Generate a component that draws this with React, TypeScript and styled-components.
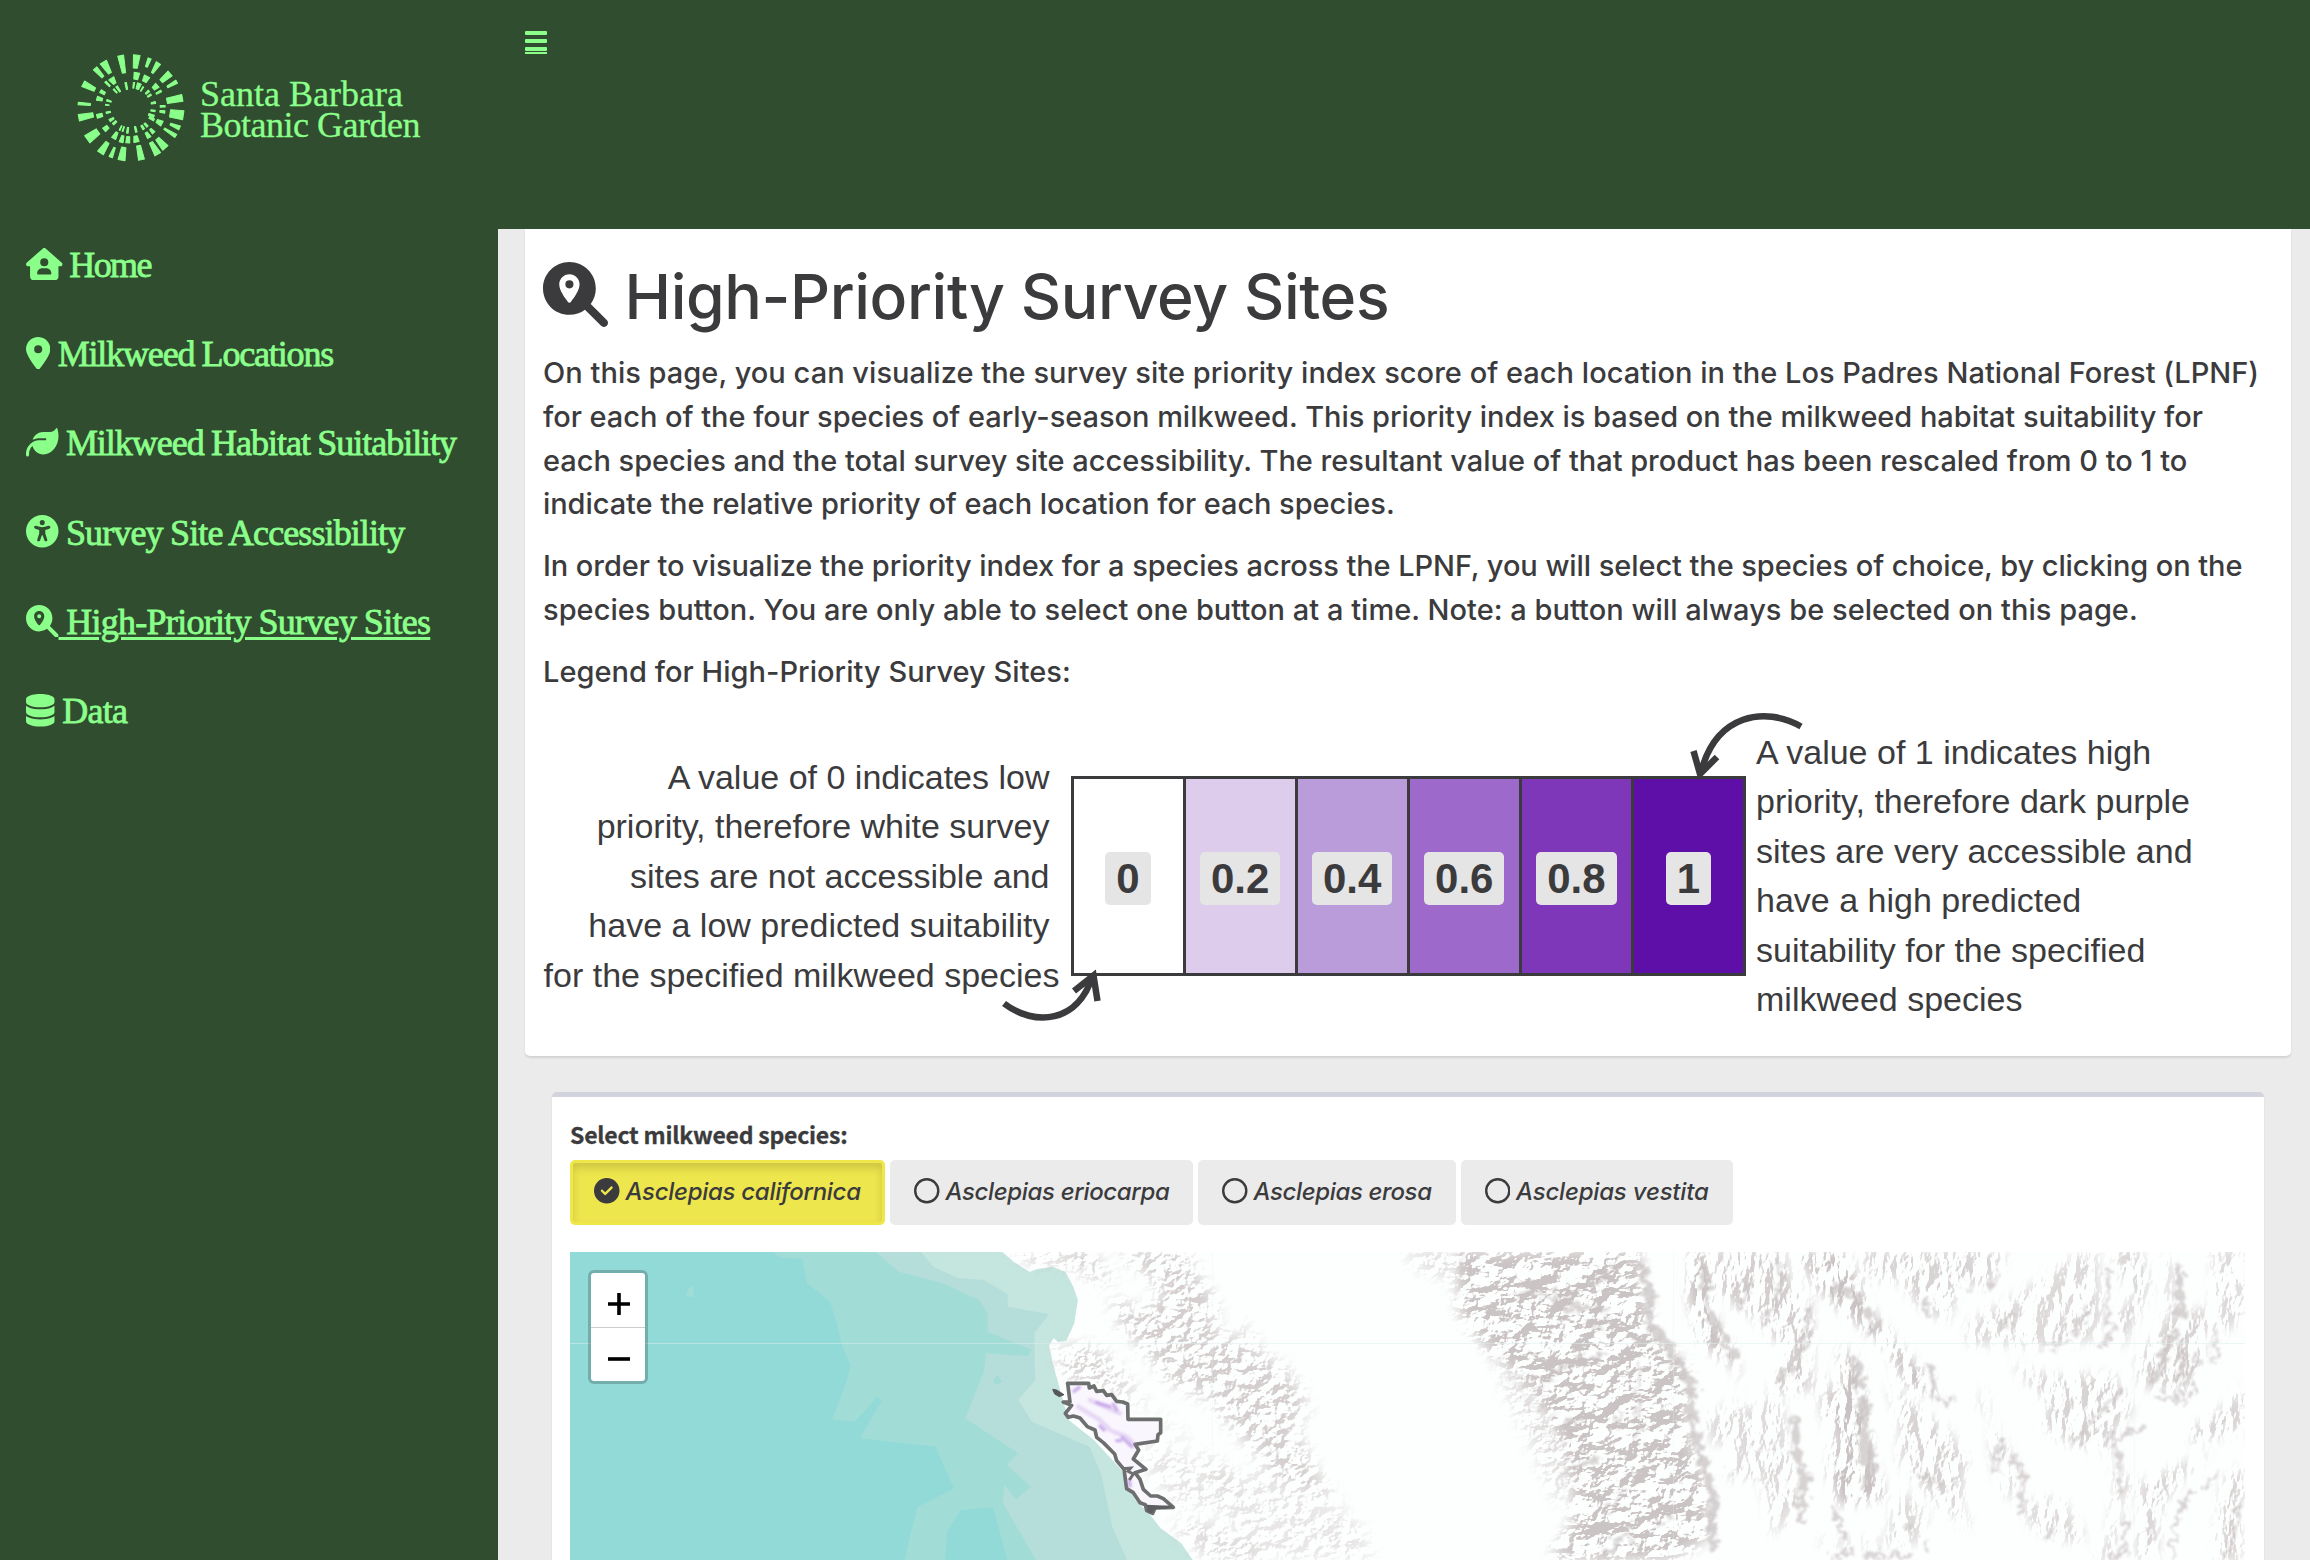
import React from 'react';
import styled, { createGlobalStyle } from 'styled-components';
import {
  FaCircleCheck,
  FaDatabase,
  FaHouseUser,
  FaLeaf,
  FaLocationDot,
  FaMagnifyingGlassLocation,
  FaRegCircle,
  FaUniversalAccess,
} from 'react-icons/fa6';

const forest = '#304d2f';
const lime = '#8aff8a';
const ink = '#3b3b3d';
const serif = "'Liberation Serif', 'Times New Roman', serif";
const grotesk = "Inter, 'Liberation Sans', sans-serif";
const arial = "'Liberation Sans', Arial, sans-serif";

const GlobalStyle = createGlobalStyle`
  *, *::before, *::after { box-sizing: border-box; }
  body { margin: 0; background: #ebebeb; color: ${ink}; font-family: ${grotesk}; overflow: hidden; }
`;

const Page = styled.div`
  display: flex;
  width: 2310px;
  height: 1560px;
  overflow: hidden;
`;

const Sidebar = styled.aside`
  flex: none;
  width: 498px;
  background: ${forest};
  color: ${lime};
  font-family: ${serif};
`;

const Brand = styled.div`
  display: flex;
  align-items: flex-start;
  height: 219.2px;
  padding: 40px 0 0 60px;
`;

const BrandMark = styled.svg`
  flex: none;
  width: 140px;
  height: 140px;
  fill: ${lime};
`;

const BrandName = styled.div`
  padding-top: 38.5px;
  font-size: 36px;
  line-height: 31px;
  white-space: nowrap;
  -webkit-text-stroke: 0.3px ${lime};
`;

const BrandLine = styled.div<{ $track: number }>`
  letter-spacing: ${(p) => p.$track}px;
`;

const NavItem = styled.a<{ $active?: boolean; $track: number }>`
  display: flex;
  align-items: center;
  height: 89.3px;
  padding-left: 26px;
  font-size: 36px;
  letter-spacing: ${(p) => p.$track}px;
  white-space: pre;
  -webkit-text-stroke: 0.8px ${lime};
  text-decoration: ${(p) => (p.$active ? 'underline' : 'none')};
  text-decoration-thickness: 2.5px;
  text-underline-offset: 2.5px;
`;

const NavIcon = styled.span<{ $width: number }>`
  display: flex;
  flex: none;
  width: ${(p) => p.$width}px;

  svg {
    width: 100%;
    height: 32.5px;
  }
`;

const NavText = styled.span`
  padding-top: 2px;
  word-spacing: -0.6px;
`;

const Main = styled.main`
  display: flex;
  flex: 1;
  flex-direction: column;
  min-width: 0;
`;

const TopBar = styled.header`
  flex: none;
  height: 229px;
  padding: 31px 27px;
  background: ${forest};
`;

const MenuToggle = styled.div`
  display: flex;
  flex-direction: column;
  gap: 4px;
  width: 22px;
  padding-bottom: 1px;
  border-bottom: 2px solid ${lime};
`;

const MenuBar = styled.span`
  height: 4px;
  border-radius: 1px;
  background: ${lime};
`;

const Content = styled.div`
  display: flex;
  flex: 1;
  flex-direction: column;
  gap: 36px;
  padding: 0 19px 0 27px;
`;

const Intro = styled.section`
  position: relative;
  height: 827px;
  padding: 32px 18px 0;
  background: #fff;
  border-radius: 0 0 5px 5px;
  box-shadow: 0 2px 2px rgba(0, 0, 0, 0.1);
`;

const Title = styled.h1`
  display: flex;
  align-items: center;
  height: 70px;
  margin: 0 0 20px;
  font-size: 62.5px;
  font-weight: 500;
  line-height: 70px;
  letter-spacing: -0.4px;

  svg {
    width: 65px;
    height: 65px;
    margin: -4px 16.5px 0 0;
  }
`;

const Paragraph = styled.p`
  margin: 0 0 18px;
  font-size: 29px;
  font-weight: 500;
  line-height: 43.8px;
`;

const TextLine = styled.span<{ $track: number }>`
  display: block;
  letter-spacing: ${(p) => p.$track}px;
  white-space: nowrap;
`;

const Legend = styled.div`
  display: flex;
  align-items: flex-start;
  margin-top: -19px;
  font-family: ${arial};
`;

const LegendNote = styled.div<{ $side: 'left' | 'right' }>`
  flex: none;
  width: ${(p) => (p.$side === 'left' ? 527.5 : 500)}px;
  padding: ${(p) => (p.$side === 'left' ? '60.5px 21px 0 0' : '35.5px 0 0 10px')};
  font-size: 34px;
  line-height: 49.4px;
  text-align: ${(p) => (p.$side === 'left' ? 'right' : 'left')};
  white-space: nowrap;
`;

const LastLine = styled.div`
  margin-right: -10px;
`;

const Scale = styled.div`
  display: flex;
  width: 675.5px;
  height: 200px;
  margin-top: 83px;
  border: 3px solid ${ink};
`;

const Swatch = styled.div<{ $color: string }>`
  display: flex;
  flex: 1;
  align-items: center;
  justify-content: center;
  background: ${(p) => p.$color};

  & + & {
    border-left: 3px solid ${ink};
  }
`;

const SwatchLabel = styled.span`
  padding: 0 11px;
  margin-top: 5px;
  border-radius: 5px;
  background: #e5e5e5;
  font-size: 42px;
  font-weight: 700;
  line-height: 53px;
`;

const Arrows = styled.svg`
  position: absolute;
  left: 18px;
  top: 464px;
  width: 1730px;
  height: 350px;
  fill: none;
  stroke: ${ink};
  stroke-width: 6.5;
`;

const MapCard = styled.section`
  flex: 1;
  margin: 0 27px;
  padding: 31px 18px 0;
  border-top: 5px solid #d2d3de;
  border-radius: 5px 5px 0 0;
  background: #fff;
  box-shadow: 0 2px 2px rgba(0, 0, 0, 0.1);
`;

const FieldLabel = styled.div`
  height: 32px;
  font-family: 'Noto Sans CJK JP', 'Noto Sans', sans-serif;
  font-size: 23px;
  font-weight: 700;
  line-height: 12px;
  letter-spacing: -0.22px;
  -webkit-text-stroke: 0.3px ${ink};
`;

const SpeciesGroup = styled.div`
  display: flex;
  gap: 5px;
  margin-bottom: 27px;
`;

const SpeciesButton = styled.button<{ $selected?: boolean; $width: number; $track: number }>`
  display: flex;
  align-items: center;
  width: ${(p) => p.$width}px;
  height: 65px;
  padding: 0 0 2px 21px;
  border: 3px solid ${(p) => (p.$selected ? '#efe74a' : '#ebebeb')};
  border-radius: 5px;
  background: ${(p) => (p.$selected ? '#eee64d' : '#ebebeb')};
  box-shadow: ${(p) => (p.$selected ? 'inset 0 5px 9px rgba(0, 0, 0, 0.14)' : 'none')};
  color: ${ink};
  font-family: ${grotesk};
  font-size: 24px;
  font-style: italic;
  font-weight: 500;
  letter-spacing: ${(p) => p.$track}px;
  white-space: nowrap;

  svg {
    flex: none;
    width: 25.5px;
    height: 25.5px;
    margin: -1px 6px 0 0;
  }
`;

const MapFrame = styled.div`
  position: relative;
  height: 308px;
  overflow: hidden;
`;

const Terrain = styled.svg`
  display: block;
  width: 1675px;
  height: 308px;
`;

const ZoomControl = styled.div`
  position: absolute;
  left: 18px;
  top: 18px;
  width: 60px;
  border: 3px solid rgba(0, 0, 0, 0.2);
  border-radius: 6px;
  background: #fff;
  background-clip: padding-box;
`;

const ZoomButton = styled.div`
  display: flex;
  align-items: center;
  justify-content: center;
  height: 54px;
  padding: 8px 0 0 1px;

  & + & {
    border-top: 1px solid #ccc;
  }

  svg {
    width: 22px;
    height: 22px;
    stroke: #000;
    stroke-width: 3.6;
  }
`;

/* Sunburst ray: centre x, centre y, length, inner width, outer width. */
type Ray = [number, number, number, number, number];
const rays: Ray[] = [
  [187, 73, 56, 12, 20], [228, 65, 42, 14, 22], [264, 68, 30, 8, 12], [286, 84, 38, 8, 17],
  [317, 112, 38, 14, 21], [336, 133, 35, 8, 13], [344, 178, 50, 18, 22], [350, 223, 43, 24, 29],
  [345, 258, 33, 8, 15], [330, 277, 44, 7, 13], [304, 310, 40, 14, 23], [283, 325, 44, 12, 22],
  [240, 338, 46, 14, 20], [188, 341, 42, 15, 23], [158, 337, 34, 7, 13], [132, 323, 41, 13, 23],
  [98, 286, 43, 21, 29], [78, 229, 47, 15, 22], [73, 192, 40, 8, 10], [87, 140, 42, 13, 21],
  [117, 98, 38, 10, 16], [140, 83, 42, 12, 24],
  [229, 108, 23, 14, 19], [257, 117, 21, 14, 20], [286, 141, 19, 12, 18], [296, 157, 20, 6, 8],
  [308, 199, 18, 7, 7], [307, 215, 18, 7, 9], [298, 247, 21, 12, 18], [276, 273, 18, 8, 12],
  [263, 285, 21, 9, 14], [228, 297, 21, 12, 18], [204, 299, 22, 11, 14], [186, 297, 23, 9, 14],
  [166, 286, 24, 9, 16], [138, 265, 18, 13, 16], [119, 227, 20, 12, 14], [119, 177, 20, 10, 14],
  [128, 157, 18, 10, 12], [143, 132, 22, 6, 8], [159, 123, 22, 11, 20],
  [221, 136, 20, 5, 6], [235, 139, 21, 10, 14], [246, 147, 18, 4, 5], [262, 157, 16, 6, 8],
  [268, 167, 15, 6, 7], [280, 189, 16, 6, 8], [279, 212, 16, 6, 7], [274, 226, 20, 8, 9], [275, 236, 19, 8, 9],
  [258, 255, 16, 7, 8], [248, 262, 16, 7, 8], [227, 268, 20, 6, 7], [203, 271, 20, 6, 7],
  [190, 267, 18, 4, 5], [182, 264, 18, 4, 5], [164, 248, 16, 7, 8], [155, 238, 17, 7, 10],
  [145, 217, 16, 6, 7], [142, 195, 14, 4, 5], [147, 183, 17, 5, 7], [175, 147, 22, 6, 8],
  [166, 153, 18, 5, 6], [199, 138, 24, 6, 7],
];

const SunburstRay = ({ ray: [x, y, len, wi, wo] }: { ray: Ray }) => {
  const angle = (Math.atan2(y - 203, x - 212) * 180) / Math.PI;
  const h = len / 2 - 1.5;
  const a = wi / 2 - 1;
  const b = wo / 2 - 1;
  return (
    <path
      transform={`translate(${x} ${y}) rotate(${angle})`}
      d={`M${-h} ${-a}L${h} ${-b}V${b}L${-h} ${a}Z`}
      stroke={lime}
      strokeWidth={3}
      strokeLinejoin="round"
    />
  );
};

const navItems = [
  { label: 'Home', icon: <FaHouseUser />, width: 36.5, track: -1.6 },
  { label: 'Milkweed Locations', icon: <FaLocationDot />, width: 24.4, track: -1.16 },
  { label: 'Milkweed Habitat Suitability', icon: <FaLeaf />, width: 32.5, track: -1.02 },
  { label: 'Survey Site Accessibility', icon: <FaUniversalAccess />, width: 32.5, track: -0.9 },
  { label: 'High-Priority Survey Sites', icon: <FaMagnifyingGlassLocation />, width: 32.5, track: -0.72, active: true },
  { label: 'Data', icon: <FaDatabase />, width: 28.5, track: -0.7 },
];

const paragraphs: [string, number][][] = [
  [
    ['On this page, you can visualize the survey site priority index score of each location in the Los Padres National Forest (LPNF)', 0.025],
    ['for each of the four species of early-season milkweed. This priority index is based on the milkweed habitat suitability for', -0.036],
    ['each species and the total survey site accessibility. The resultant value of that product has been rescaled from 0 to 1 to', -0.02],
    ['indicate the relative priority of each location for each species.', -0.07],
  ],
  [
    ['In order to visualize the priority index for a species across the LPNF, you will select the species of choice, by clicking on the', -0.075],
    ['species button. You are only able to select one button at a time. Note: a button will always be selected on this page.', 0.025],
  ],
  [['Legend for High-Priority Survey Sites:', 0.03]],
];

const swatches = [
  { label: '0', color: '#ffffff' },
  { label: '0.2', color: '#ddccec' },
  { label: '0.4', color: '#ba9cda' },
  { label: '0.6', color: '#9d6acc' },
  { label: '0.8', color: '#7f37b9' },
  { label: '1', color: '#5e0fa8' },
];

const species = [
  { name: 'Asclepias californica', width: 315, track: -0.3, selected: true },
  { name: 'Asclepias eriocarpa', width: 303, track: -0.36 },
  { name: 'Asclepias erosa', width: 257.5, track: -0.38 },
  { name: 'Asclepias vestita', width: 272, track: -0.2 },
];

const TerrainMap = () => (
  <Terrain viewBox="570 1252 1675 308">
    <defs>
      <filter id="hills" filterUnits="userSpaceOnUse" x="570" y="1252" width="1675" height="308" colorInterpolationFilters="sRGB">
        <feGaussianBlur in="SourceAlpha" stdDeviation="8" result="area" />
        <feTurbulence type="fractalNoise" baseFrequency="0.075 0.09" numOctaves="4" seed="4" />
        <feColorMatrix values="0 0 0 0 0  0 0 0 0 0  0 0 0 0 0  1 0 0 0 0" />
        <feDiffuseLighting surfaceScale="9" lightingColor="#fff">
          <feDistantLight azimuth="225" elevation="45" />
        </feDiffuseLighting>
        <feColorMatrix values="0 0 0 0 .79  0 0 0 0 .76  0 0 0 0 .76  -2.6 0 0 0 1.65" />
        <feComposite in2="area" operator="in" />
        <feGaussianBlur stdDeviation="0.6" />
      </filter>
      <filter id="sierra" filterUnits="userSpaceOnUse" x="570" y="1252" width="1675" height="308" colorInterpolationFilters="sRGB">
        <feGaussianBlur in="SourceAlpha" stdDeviation="7" result="area" />
        <feTurbulence type="fractalNoise" baseFrequency="0.045 0.055" numOctaves="5" seed="12" />
        <feColorMatrix values="0 0 0 0 0  0 0 0 0 0  0 0 0 0 0  1 0 0 0 0" />
        <feDiffuseLighting surfaceScale="16" lightingColor="#fff">
          <feDistantLight azimuth="235" elevation="45" />
        </feDiffuseLighting>
        <feColorMatrix values="0 0 0 0 .785  0 0 0 0 .755  0 0 0 0 .755  -3 0 0 0 1.9" />
        <feComposite in2="area" operator="in" />
        <feGaussianBlur stdDeviation="0.6" />
      </filter>
      <filter id="ridges" filterUnits="userSpaceOnUse" x="570" y="1252" width="1675" height="308" colorInterpolationFilters="sRGB">
        <feGaussianBlur in="SourceAlpha" stdDeviation="6" result="area" />
        <feTurbulence type="fractalNoise" baseFrequency="0.07 0.035" numOctaves="5" seed="9" />
        <feColorMatrix values="0 0 0 0 0  0 0 0 0 0  0 0 0 0 0  1 0 0 0 0" />
        <feDiffuseLighting surfaceScale="11" lightingColor="#fff">
          <feDistantLight azimuth="210" elevation="45" />
        </feDiffuseLighting>
        <feColorMatrix values="0 0 0 0 .79  0 0 0 0 .76  0 0 0 0 .76  -2.6 0 0 0 1.6" />
        <feComposite in2="area" operator="in" />
        <feGaussianBlur stdDeviation="0.7" />
      </filter>
      <filter id="rough" filterUnits="userSpaceOnUse" x="570" y="1252" width="1675" height="308">
        <feTurbulence type="fractalNoise" baseFrequency="0.12" numOctaves="3" seed="2" result="n" />
        <feDisplacementMap in="SourceGraphic" in2="n" scale="22" xChannelSelector="R" yChannelSelector="G" />
        <feGaussianBlur stdDeviation="0.9" />
      </filter>
      <filter id="soft"><feGaussianBlur stdDeviation="3" /></filter>
    </defs>

    <rect x="570" y="1252" width="1675" height="308" fill="#91dad8" />
    <g transform="translate(520 1070) scale(.45918 .33333)">
      <path fill="#a2dcd6" d="M545 540L565 562 615 566 625 640 675 695 690 760 702 830 720 885 710 940 680 1048 728 1055 760 1010 775 980 788 992 740 1105 905 1130 945 1255 865 1312 835 1480H1600V540Z" />
      <path fill="#91dad8" d="M925 1480L930 1385 960 1320 1030 1312 1063 1480Z" />
      <path fill="#b5dedb" d="M770 540L825 605 920 640 1000 690 1018 730 1018 785 1115 840 1105 858 1015 850 1010 905 970 1045 1085 1150 1060 1185 1113 1250 1080 1288 1055 1245 1052 1300 1128 1480H1600V540Z" />
      <path fill="#a2dcd6" d="M1030 935L1040 915 1050 935 1038 945Z" />
      <path fill="#a2dcd6" d="M368 655L378 645V680H360Z" />
      <path fill="#c5e5df" d="M870 540L900 590 955 625 1010 630 1062 672V710L1152 733 1120 790 1122 930 1085 990 1115 1055 1240 1130 1265 1210 1290 1370 1325 1480H1600V540Z" />
      <path fill="#fdfefe" d="M1045 540L1075 575 1110 606 1125 598 1160 590 1188 606 1205 650 1215 690 1207 760 1190 812 1172 816 1162 804 1152 828 1165 905 1195 1050 1250 1110 1310 1200 1340 1290 1370 1330 1395 1375 1440 1420 1470 1480H3900V540Z" />
    </g>

    <g filter="url(#hills)">
      <g transform="translate(1000 1250) scale(.33333)">
        <path opacity=".8" d="M20 0L100 40 200 40 290 90 350 95 300 40 260 0Z" />
        <path opacity=".8" d="M350 0L420 60 500 130 420 180 330 140 350 210 430 300 520 410 620 440 700 540 800 640 860 690 1000 760 1060 830 1040 800 940 650 880 520 930 480 870 370 760 290 640 240 650 150 600 90 560 0Z" />
        <path opacity=".7" d="M160 300L200 390 380 440 490 500 560 570 660 690 720 740 690 660 540 570 420 440 330 320 250 280Z" />
        <path opacity=".4" d="M440 570L430 650 520 760 650 780 720 840 690 930 1120 930 1080 820 950 760 800 640 700 700 600 640Z" />
        <path opacity=".6" d="M500 820L570 870 620 930 800 930 640 820Z" />
        <path opacity=".8" d="M710 200L770 270 740 290Z" />
      </g>
      <g transform="translate(1400 1250) scale(.33333)">
        <path opacity=".5" d="M0 0L170 0 190 100 60 60ZM280 300L330 450 420 640 480 780 520 640 400 400Z" />
      </g>
    </g>
    <g filter="url(#sierra)">
      <g transform="translate(1400 1250) scale(.33333)">
        <path opacity=".95" d="M160 0L180 200 270 310 390 420 470 560 510 700 520 800 450 930 820 930 930 860 920 700 870 560 860 350 760 250 730 100 720 0Z" />
      </g>
    </g>
    <g filter="url(#ridges)">
      <g transform="translate(1400 1250) scale(.33333)">
        <path d="M870 0L860 120 900 280 1000 350 1030 420 1000 300 940 200 920 0Z" />
        <path opacity=".8" d="M940 0L950 130 1060 200 1160 300 1110 430 1230 420 1240 260 1230 160 1170 90 1150 0Z" />
        <path opacity=".6" d="M920 500L990 460 1060 480 1100 440 1140 440 1180 640 1200 760 1120 860 1080 680 980 690 1000 580 930 580Z" />
        <path opacity=".8" d="M1170 0H1340L1320 170 1250 120Z" />
        <path opacity=".6" d="M1240 400L1290 380 1330 500 1330 720 1290 640 1280 500Z" />
      </g>
      <g transform="translate(1820 1250) scale(.33333)">
        <path d="M0 0L80 20 160 190 240 290 340 400 370 450 250 400 200 290 60 180 0 120Z" />
        <path d="M60 290L110 320 140 480 160 640 200 740 60 770 20 660 70 560 0 480 60 420Z" />
        <path opacity=".7" d="M130 0H560L520 100 420 110 380 220 290 160 240 90 130 90Z" />
        <path opacity=".7" d="M200 400L290 470 380 540 440 620 420 800 370 780 240 640 240 520Z" />
        <path opacity=".6" d="M440 220L600 130 700 60 790 0 830 0 850 200 820 270 640 290 440 280Z" />
        <path opacity=".7" d="M870 0L960 0 990 100 960 180 900 300 880 200 940 150Z" />
        <path opacity=".7" d="M1030 0L1060 60V200L1170 170 1150 320 1110 430 960 410 950 330 1040 200Z" />
        <path opacity=".6" d="M1180 0L1278 0V200L1180 270Z" />
        <path opacity=".7" d="M570 340L690 380 880 370 940 480 870 560 890 700 860 880 820 930 880 930 900 760 940 700 850 600 740 580 660 520 690 460Z" />
        <path opacity=".6" d="M480 480L520 500 510 620 540 700 580 760 600 660 540 560 480 400Z" />
        <path opacity=".6" d="M600 760L720 740 800 860 760 880 640 840ZM400 780L450 800 440 850Z" />
        <path opacity=".7" d="M1278 400L1180 500 1100 540 1120 580 1278 540Z" />
        <path opacity=".7" d="M1180 600L1090 680 1020 780 1010 930 950 930 960 700ZM1278 640L1210 690 1180 930H1260Z" />
        <path opacity=".6" d="M220 780L260 720 320 800 300 880 0 890 0 870 200 870Z" />
      </g>
    </g>
    <g filter="url(#rough)" fill="none" stroke="#c9c2c2" strokeLinecap="round" opacity=".72">
      <g transform="translate(1411 1261) scale(.33333)">
        <path strokeWidth="26" d="M690 10L715 90 715 180 800 300 840 380 842 480 880 620 905 700 905 850" />
        <path strokeWidth="22" d="M880 30L885 130 930 220 970 290M1150 470L1160 580 1180 660 1170 770" />
        <path strokeWidth="14" d="M320 100L480 105 600 30M460 140L590 150M420 330L580 280M470 490L540 465M490 620L560 590M600 750L640 690M560 910L660 800M1020 60L990 140M1110 20L1100 120 1060 190M1200 130L1170 300 1110 350M1260 740L1300 820" />
        <path strokeWidth="8" d="M680 300V520M370 390L440 330M540 200L590 170M640 830L700 860M740 800L800 740M620 420V500" />
      </g>
      <g transform="translate(1831 1261) scale(.33333)">
        <path strokeWidth="32" d="M95 420L100 520 105 600M75 310L85 370" />
        <path strokeWidth="20" d="M10 90L60 90 110 170 140 200M300 320L305 400M130 600L100 680M1045 20L1050 170M1030 210L980 330 960 360" />
        <path strokeWidth="12" d="M500 40L470 90M400 80H420M280 110L295 160M550 165L510 200M770 140L730 210M830 30V180L845 190 820 260M640 260L720 240M270 640L340 680M360 420L310 410M740 540L780 480 870 400M830 540L930 500M860 550L865 700M880 770L885 860 830 910M510 530L495 620M545 580L580 650 570 750M640 830L670 810M1055 240L1050 400M1095 280L1085 400M1160 210V300M980 405L1060 420M1080 690L1030 790 1020 920M1160 640L1120 680M1230 720L1190 890M10 740L40 820M240 780L220 800M300 860L280 850M10 890L60 870M100 885L240 888" />
      </g>
    </g>

    <path d="M570 1343.5H2245" stroke="#dceeee" strokeOpacity=".5" />
    <path d="M1212.5 1252V1560M1673.5 1252V1560M2134.5 1252V1560" stroke="#e8f2f2" strokeOpacity=".3" />

    <g transform="translate(1000 1250) scale(.33333)">
      <path
        d="M203 400H266L268 414 282 408 290 424 310 422 320 436 335 434 350 454 368 456 383 462 384 508H482V548L474 554 472 573 405 583 416 600 400 627 438 658 405 668 420 688 430 718 452 738 472 738 490 746 520 772 465 774 458 790 440 782 436 764 420 758 400 728 380 716 372 658 350 632 344 612 310 578 290 562 285 540 262 530 240 504 220 498 205 502 196 490 215 466 190 456 210 456Z"
        fill="#faf6fd"
        stroke="#6d6e6e"
        strokeWidth="11"
        strokeLinejoin="round"
      />
      <g fill="none" stroke="#b893e2" strokeLinecap="round" filter="url(#soft)">
        <path strokeWidth="10" opacity=".7" d="M222 424L238 412M290 458L330 470M340 462L350 480M300 528L312 540M350 572H362M366 562L396 590M388 690L390 708" />
        <path strokeWidth="14" opacity=".3" d="M235 470L300 510 330 540M270 450L360 490M380 560L400 580M340 545L380 560" />
      </g>
      <path d="M158 418L170 420 192 434 178 440 164 432Z" fill="#565759" stroke="#565759" strokeWidth="3" />
      <path d="M368 656L392 654 384 664 400 672 388 690" fill="none" stroke="#6d6e6e" strokeWidth="9" />
      <path d="M440 764L520 768 500 776 462 778 456 790 442 786Z" fill="#5d5e5f" />
    </g>
  </Terrain>
);

export default function App() {
  return (
    <Page>
      <GlobalStyle />
      <Sidebar>
        <Brand>
          <BrandMark viewBox="0 0 420 420">
            {rays.map((ray, i) => (
              <SunburstRay key={i} ray={ray} />
            ))}
          </BrandMark>
          <BrandName>
            <BrandLine $track={0}>Santa Barbara</BrandLine>
            <BrandLine $track={-0.5}>Botanic Garden</BrandLine>
          </BrandName>
        </Brand>
        <nav>
          {navItems.map((item) => (
            <NavItem key={item.label} $active={item.active} $track={item.track}>
              <NavIcon $width={item.width}>{item.icon}</NavIcon>
              <NavText>{` ${item.label}`}</NavText>
            </NavItem>
          ))}
        </nav>
      </Sidebar>
      <Main>
        <TopBar>
          <MenuToggle>
            <MenuBar />
            <MenuBar />
            <MenuBar />
          </MenuToggle>
        </TopBar>
        <Content>
          <Intro>
            <Title>
              <FaMagnifyingGlassLocation />
              High-Priority Survey Sites
            </Title>
            {paragraphs.map((lines, i) => (
              <Paragraph key={i}>
                {lines.map(([text, track]) => (
                  <TextLine key={text} $track={track}>
                    {text}
                  </TextLine>
                ))}
              </Paragraph>
            ))}
            <Legend>
              <LegendNote $side="left">
                <div>A value of 0 indicates low</div>
                <div>priority, therefore white survey</div>
                <div>sites are not accessible and</div>
                <div>have a low predicted suitability</div>
                <LastLine>for the specified milkweed species</LastLine>
              </LegendNote>
              <Scale>
                {swatches.map((s) => (
                  <Swatch key={s.label} $color={s.color}>
                    <SwatchLabel>{s.label}</SwatchLabel>
                  </Swatch>
                ))}
              </Scale>
              <LegendNote $side="right">
                <div>A value of 1 indicates high</div>
                <div>priority, therefore dark purple</div>
                <div>sites are very accessible and</div>
                <div>have a high predicted</div>
                <div>suitability for the specified</div>
                <div>milkweed species</div>
              </LegendNote>
            </Legend>
            <Arrows viewBox="543 693 1730 350">
              <path d="M1004 1003.500C1035 1027 1078 1023 1092.500 976" />
              <path d="M1074 991L1093.500 975.500 1097.500 1001" />
              <path d="M1801 726.500C1765 706 1716 714 1701 772" />
              <path d="M1693.500 751L1700 774 1717 757" />
            </Arrows>
          </Intro>
          <MapCard>
            <FieldLabel>Select milkweed species:</FieldLabel>
            <SpeciesGroup>
              {species.map((s) => (
                <SpeciesButton key={s.name} $selected={s.selected} $width={s.width} $track={s.track}>
                  {s.selected ? <FaCircleCheck /> : <FaRegCircle />}
                  {s.name}
                </SpeciesButton>
              ))}
            </SpeciesGroup>
            <MapFrame>
              <TerrainMap />
              <ZoomControl>
                <ZoomButton>
                  <svg viewBox="0 0 22 22">
                    <path d="M0 11H22M11 0V22" />
                  </svg>
                </ZoomButton>
                <ZoomButton>
                  <svg viewBox="0 0 22 22">
                    <path d="M0 11H22" />
                  </svg>
                </ZoomButton>
              </ZoomControl>
            </MapFrame>
          </MapCard>
        </Content>
      </Main>
    </Page>
  );
}
